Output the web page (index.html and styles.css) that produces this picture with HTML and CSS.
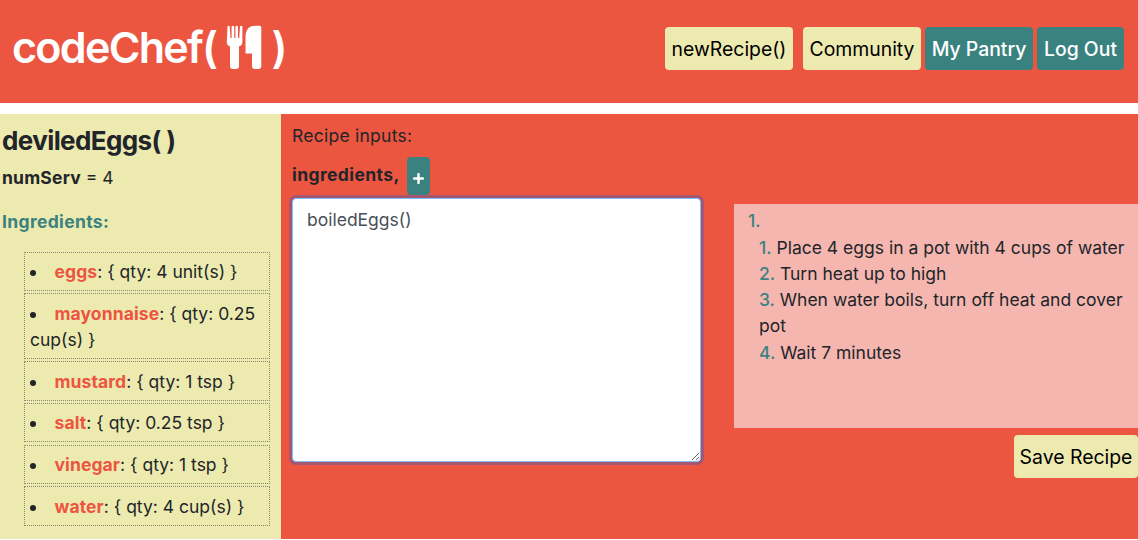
FILE: index.html
```html
<!DOCTYPE html>
<html lang="en">
<head>
    <meta charset="UTF-8">
    <meta name="viewport" content="width=device-width, initial-scale=1.0">
    <title>codeChef()</title>
    <link rel="stylesheet" href="styles.css">
</head>
<body>

<header class="header">
    <h1 class="logo">
        <span class="logo-name">codeChef(</span>
        <svg class="logo-icon" viewBox="0 0 36 45" width="36" height="45">
            <!-- Fork -->
            <path d="M1.5 1.5 Q2.7 0 3.7 1.5 L4.5 13 H5.6 V1.5 Q7 0 8.2 1.5 V13 H9.4 V1.5 Q10.6 0 12 1.5 V13 H13.2 L14 1.5 Q15 0 16.4 1.5 V17 Q16.4 20.5 13 21.5 V41 Q13 44 10 44 H7 Q4 44 4 41 V21.5 Q.8 20.5 .8 17 Z"/>
            <!-- Knife -->
            <path d="M29 .7 H33.5 Q35.3 .7 35.3 2.5 V41 Q35.3 44 32.3 44 H29 Q26 44 26 41 V28.5 H19.5 V10 Q20.5 .7 29 .7 Z"/>
        </svg>
        <span class="logo-close">)</span>
    </h1>
    <nav class="nav">
        <button class="button button-new">newRecipe()</button>
        <button class="button button-community">Community</button>
        <button class="button button-teal button-pantry">My Pantry</button>
        <button class="button button-teal button-logout">Log Out</button>
    </nav>
</header>

<main class="main">
    <aside class="sidebar">
        <h2 class="recipe-name">deviledEggs( )</h2>
        <p class="servings"><b>numServ</b> = 4</p>
        <h3 class="ingredients-title">Ingredients:</h3>
        <ul class="ingredients">
            <li><b>eggs</b>: { qty: 4 unit(s) }</li>
            <li><b>mayonnaise</b>: { qty: 0.25 cup(s) }</li>
            <li><b>mustard</b>: { qty: 1 tsp }</li>
            <li><b>salt</b>: { qty: 0.25 tsp }</li>
            <li><b>vinegar</b>: { qty: 1 tsp }</li>
            <li><b>water</b>: { qty: 4 cup(s) }</li>
        </ul>
    </aside>

    <section class="editor">
        <p class="inputs-title">Recipe inputs:</p>
        <div class="inputs">
            <b>ingredients,</b>
            <button class="add-button" aria-label="Add">
                <svg viewBox="0 0 11 11" width="11" height="11"><path d="M5.5 1V10M1 5.5H10"/></svg>
            </button>
        </div>
        <div class="workspace">
            <textarea class="code" spellcheck="false">boiledEggs()</textarea>
            <div class="result">
                <div class="steps">
                    <div><span class="num">1.</span></div>
                    <div class="sub-steps">
                        <div><span class="num">1.</span> Place 4 eggs in a pot with 4 cups of water</div>
                        <div><span class="num">2.</span> Turn heat up to high</div>
                        <div><span class="num">3.</span> When water boils, turn off heat and cover pot</div>
                        <div><span class="num">4.</span> Wait 7 minutes</div>
                    </div>
                </div>
                <button class="button button-save">Save Recipe</button>
            </div>
        </div>
    </section>
</main>

</body>
</html>
```

FILE: styles.css
```css
* {
    box-sizing: border-box;
}

body {
    margin: 0;
    background-color: #fff;
    color: #212529;
    font-family: Inter, "Liberation Sans", sans-serif;
    font-size: 17.5px;
    line-height: 26.3px;
    overflow: hidden;
}

h1, h2, h3, p, ul {
    margin: 0;
    padding: 0;
}

b {
    font-weight: 700;
}

/* Header */
.header {
    display: flex;
    justify-content: space-between;
    align-items: flex-start;
    height: 103px;
    padding: 0 14px 0 12px;
    background-color: #ec5540;
}

.logo {
    display: flex;
    align-items: flex-start;
    color: #fff;
    font-size: 43px;
    font-weight: 600;
    line-height: 52px;
    letter-spacing: -1.7px;
    padding-top: 21px;
}

.logo-icon {
    fill: #fff;
    margin: 4px 9px 0 10px;
}

.nav {
    display: flex;
    gap: 4px;
    padding-top: 27px;
}

.button {
    height: 43px;
    padding: 1px 0 0;
    border: none;
    border-radius: 4px;
    background-color: #edeaaf;
    color: #000;
    font-family: inherit;
    font-size: 19.4px;
    line-height: 42px;
    white-space: nowrap;
    cursor: pointer;
}

.button-new {
    width: 128px;
    margin-right: 6px;
}

.button-community {
    width: 118px;
}

.button-teal {
    background-color: #3a827f;
    color: #fff;
    font-weight: 500;
}

.button-pantry {
    width: 108px;
}

.button-logout {
    width: 87px;
}

/* Main */
.main {
    display: flex;
    height: 425px;
    margin-top: 11px;
}

.sidebar {
    width: 281px;
    padding: 11px 11px 0 2px;
    background-color: #edeaaf;
}

.recipe-name {
    font-size: 26px;
    font-weight: 700;
    line-height: 32px;
    letter-spacing: -0.6px;
}

.servings {
    margin-top: 8px;
}

.servings b {
    letter-spacing: 0.2px;
}

.ingredients-title {
    margin-top: 18px;
    color: #3a827f;
    font-size: 17.5px;
    font-weight: 700;
    line-height: 26.3px;
    letter-spacing: 0.35px;
}

.ingredients {
    margin: 16px 0 0 22px;
    list-style-position: inside;
}

.ingredients li {
    margin-bottom: 2.2px;
    padding: 6.5px 6px 4.7px 5px;
    border: 1px dotted #8a8870;
}

.ingredients b {
    color: #ec5540;
    letter-spacing: 0.1px;
}

/* Editor */
.editor {
    flex: 1;
    min-width: 0;
    padding: 9px 0 0 11px;
    background-color: #ec5540;
}

.inputs-title {
    letter-spacing: 0.25px;
}

.inputs {
    display: flex;
    gap: 7px;
    margin-top: 8px;
}

.inputs b {
    line-height: 36px;
    letter-spacing: 0.4px;
}

.add-button {
    display: flex;
    align-items: center;
    justify-content: center;
    width: 23px;
    height: 38px;
    padding: 4px 0 0;
    border: none;
    border-radius: 4px;
    background-color: #3a827f;
}

.add-button path {
    stroke: #fff;
    stroke-width: 2.4;
    stroke-linecap: round;
}

.workspace {
    display: flex;
    gap: 33px;
    margin-top: 3px;
}

.code {
    display: block;
    width: 409px;
    height: 264px;
    padding: 8px 14px;
    border: 1px solid #80bdff;
    border-radius: 4px;
    outline: none;
    background-color: #fff;
    box-shadow: 0 0 0 3px rgba(80, 90, 170, 0.45);
    color: #495057;
    font-family: inherit;
    font-size: 17.5px;
    line-height: 26.3px;
}

.result {
    display: flex;
    flex: 1;
    flex-direction: column;
    min-width: 0;
    padding-top: 6px;
}

.steps {
    height: 224px;
    padding: 4px 5px 0 14px;
    background-color: #f5b6b0;
}

.sub-steps {
    padding-left: 11px;
}

.num {
    color: #3a827f;
    font-weight: 500;
}

.button-save {
    align-self: flex-end;
    width: 124px;
    margin-top: 7px;
}
```
